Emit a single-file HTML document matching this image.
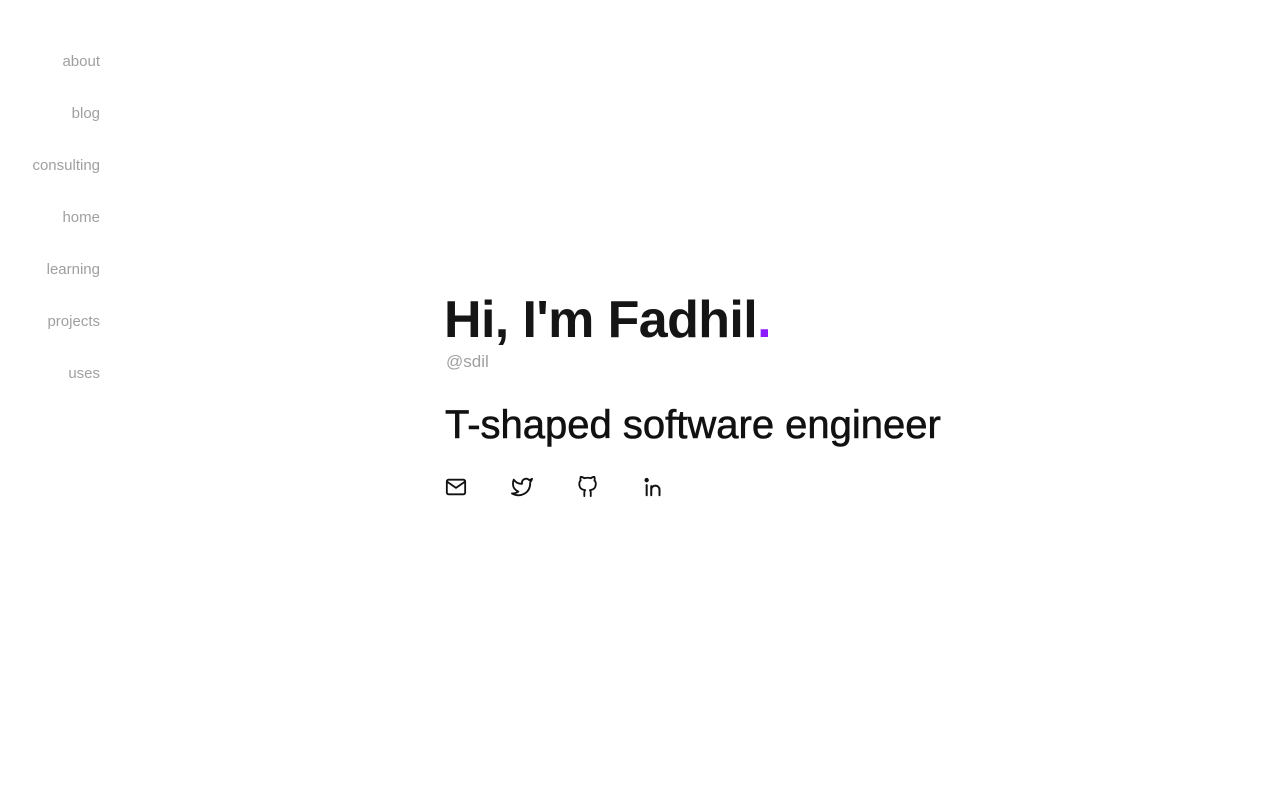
<!DOCTYPE html>
<html><head><style>
body{margin:0;background:#fff;font-family:"Liberation Sans",sans-serif;}
.nav{position:absolute;left:0;top:0;width:100px;text-align:right;}
.nav a{position:absolute;right:0;font-size:15px;color:#a0a0a0;text-decoration:none;white-space:nowrap;}
h1{position:absolute;left:444px;top:292px;margin:0;font-size:52px;letter-spacing:-0.6px;font-weight:bold;color:#151515;line-height:1.1;}
h1 span{color:#8a1cff;}
.at{position:absolute;left:446px;top:352px;font-size:17px;color:#a0a0a0;}
h2{position:absolute;left:445px;top:401px;margin:0;font-size:40px;font-weight:normal;color:#111;letter-spacing:0px;line-height:1.2;-webkit-text-stroke:0.6px #111;}
svg{position:absolute;top:476px;}
</style></head><body>
<div class="nav">
<a style="top:53px">about</a>
<a style="top:105px">blog</a>
<a style="top:157px">consulting</a>
<a style="top:209px">home</a>
<a style="top:261px">learning</a>
<a style="top:313px">projects</a>
<a style="top:365px">uses</a>
</div>
<h1>Hi, I'm Fadhil<span>.</span></h1>
<div class="at">@sdil</div>
<h2>T-shaped software engineer</h2>
<svg style="left:445px" width="22" height="22" viewBox="0 0 24 24" fill="none" stroke="#111" stroke-width="2" stroke-linejoin="round"><rect x="2" y="4" width="20" height="16" rx="2"/><path d="M2 6l10 7 10-7"/></svg>
<svg style="left:510px" width="24" height="22" viewBox="0 0 24 24" fill="none" stroke="#111" stroke-width="2" stroke-linejoin="round" stroke-linecap="round"><path d="M23 3a10.9 10.9 0 0 1-3.14 1.53 4.48 4.48 0 0 0-7.86 3v1A10.66 10.66 0 0 1 3 4s-4 9 5 13a11.64 11.64 0 0 1-7 2c9 5 20 0 20-11.5a4.5 4.5 0 0 0-.08-.83A7.72 7.72 0 0 0 23 3z"/></svg>
<svg style="left:577px" width="22" height="22" viewBox="0 0 24 24" fill="none" stroke="#111" stroke-width="2" stroke-linejoin="round" stroke-linecap="round"><path d="M15 22v-3.9a3.4 3.4 0 0 0-.9-2.6c3.1-.4 6.4-1.5 6.4-7a5.4 5.4 0 0 0-1.5-3.8 5 5 0 0 0-.1-3.8s-1.2-.3-3.9 1.5a13.4 13.4 0 0 0-7 0C5.3 .6 4.1.9 4.1.9a5 5 0 0 0-.1 3.8A5.4 5.4 0 0 0 2.5 8.5c0 5.4 3.3 6.6 6.4 7a3.4 3.4 0 0 0-.9 2.6V22"/></svg>
<svg style="left:642px" width="24" height="22" viewBox="0 0 24 24" fill="none" stroke="#111" stroke-width="2.2" stroke-linejoin="round" stroke-linecap="round"><path d="M4 10v11"/><circle cx="4" cy="4.5" r="1.3" fill="#111"/><path d="M9 21v-6a4.5 4.5 0 0 1 9 0v6M9 21V11"/></svg>
</body></html>
